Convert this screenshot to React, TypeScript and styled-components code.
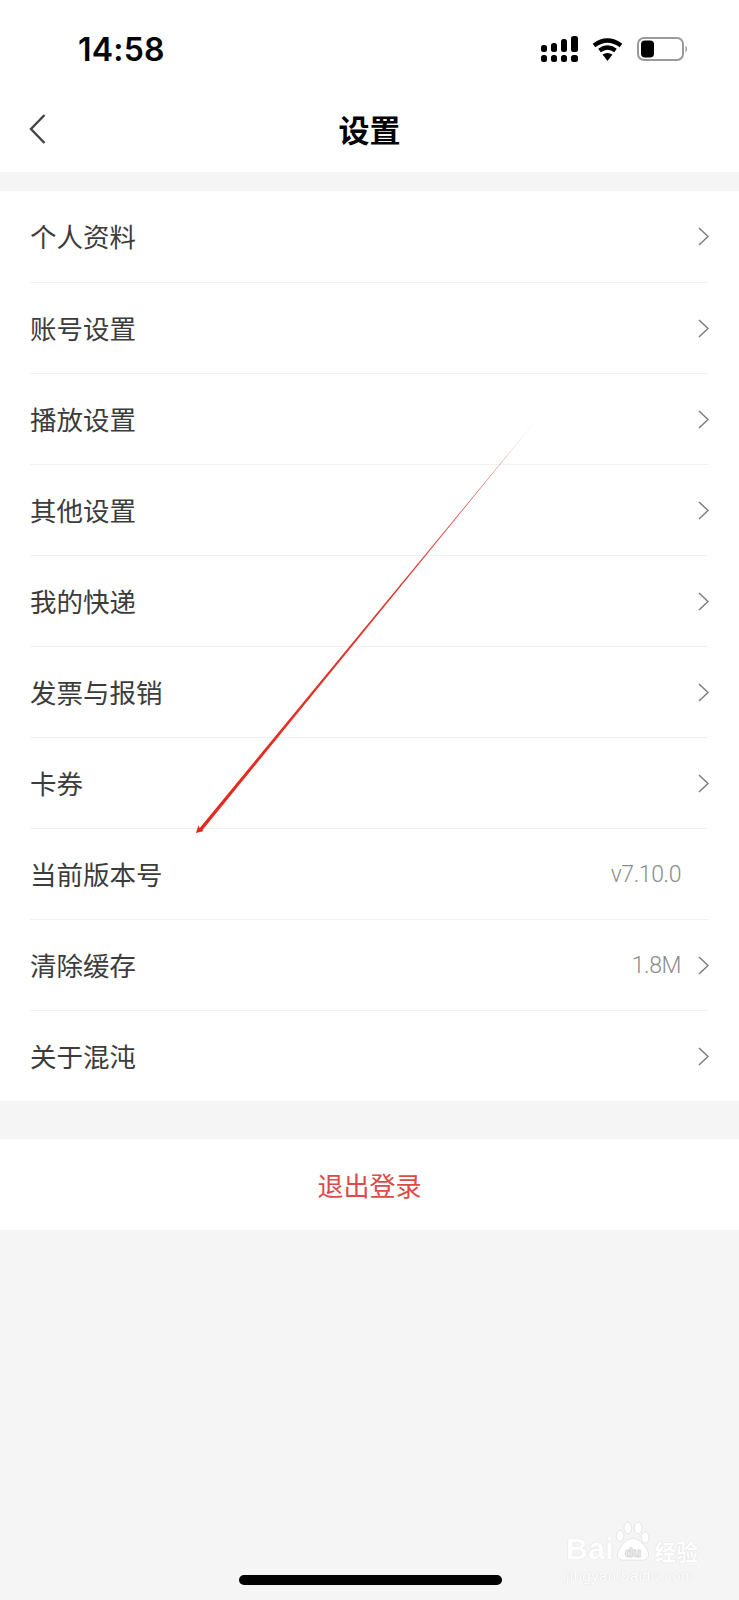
import React from "react";
import styled, { createGlobalStyle } from "styled-components";

const GlobalStyle = createGlobalStyle`
  html, body {
    margin: 0;
    padding: 0;
    background: #f4f4f4;
  }
  * {
    box-sizing: border-box;
  }
`;

const CJK = `"Noto Sans CJK SC", "Noto Sans", sans-serif`;

const Page = styled.div`
  position: relative;
  display: flex;
  flex-direction: column;
  width: 739px;
  height: 1600px;
  overflow: hidden;
  background: #f5f5f5;
  font-family: ${CJK};
`;

/* status bar */
const StatusBar = styled.div`
  display: flex;
  align-items: center;
  justify-content: space-between;
  height: 98px;
  padding: 0 52px 0 78px;
  background: #fff;
`;

const Clock = styled.span`
  font-family: "Inter", "Liberation Sans", sans-serif;
  font-size: 32px;
  font-weight: 600;
  letter-spacing: 0.2px;
  color: #050505;
`;

const StatusIcons = styled.div`
  display: flex;
  align-items: center;
  gap: 14px;
`;

/* nav */
const NavBar = styled.div`
  display: grid;
  grid-template-columns: 1fr auto 1fr;
  align-items: center;
  height: 74px;
  padding: 0 29px;
  background: #fff;
`;

const BackButton = styled.svg`
  display: block;
  margin-top: -13px;
`;

const Title = styled.h1`
  margin: -12px 0 0;
  font-size: 31px;
  font-weight: 700;
  line-height: 1.2;
  color: #000;
`;

/* list */
const List = styled.div<{ $gap: number }>`
  margin-top: ${({ $gap }) => $gap}px;
  background: #fff;
`;

const Row = styled.div`
  display: flex;
  align-items: center;
  height: 91px;
  margin: 0 30px 0 30px;

  & + & {
    border-top: 1px solid #f1f1f1;
  }
`;

const Label = styled.span`
  flex: 1;
  font-size: 26.5px;
  line-height: 1;
  color: #3c3c3c;
`;

const Value = styled.span`
  font-family: "Roboto", "Liberation Sans", sans-serif;
  font-size: 23px;
  font-weight: 300;
  letter-spacing: -0.4px;
  color: #8c8c8c;
`;

const ChevronSlot = styled.span`
  display: flex;
  justify-content: flex-end;
  width: 28px;
`;

const LogoutRow = styled.div`
  display: flex;
  align-items: center;
  justify-content: center;
  height: 91px;
  margin-top: 38px;
  background: #fff;
  font-size: 26px;
  color: #dd4a4a;
`;

const HomeIndicator = styled.div`
  width: 263px;
  height: 10px;
  margin: auto 0 15px 239px;
  border-radius: 5px;
  background: #000;
`;

/* overlays */
const ArrowLayer = styled.svg`
  position: absolute;
  top: 0;
  left: 0;
  pointer-events: none;
`;

const Watermark = styled.div`
  position: absolute;
  top: 1518px;
  left: 566px;
  width: 134px;
  color: #fff;
  text-shadow: 0 0 1px #dcdcdc, 0 0 1px #dcdcdc;
`;

const BrandLine = styled.div`
  display: flex;
  align-items: flex-end;
  height: 46px;
`;

const BrandLatin = styled.span`
  font-family: "Liberation Sans", sans-serif;
  font-size: 30px;
  font-weight: 700;
  line-height: 30px;
  letter-spacing: 0.5px;
`;

const Paw = styled.svg`
  flex: none;
  margin: 0 2px 0 0;
`;

const BrandCn = styled.span`
  font-size: 22px;
  font-weight: 700;
  line-height: 28px;
  white-space: nowrap;
`;

const BrandUrl = styled.div`
  margin-top: 3px;
  font-family: "Liberation Sans", sans-serif;
  font-size: 15px;
  line-height: 17px;
  letter-spacing: 0.4px;
  white-space: nowrap;
`;

const Chevron = () => (
  <svg width="11" height="19" viewBox="0 0 11 19" fill="none">
    <path d="M1 1l9 8.500L1 18" stroke="#7d7d7d" strokeWidth="1.500" />
  </svg>
);

const SignalIcon = () => (
  <svg width="37" height="26" viewBox="0 0 37 26" fill="#000">
    <rect x="0" y="9" width="6" height="7" rx="2.500" />
    <rect x="0" y="19" width="6" height="7" rx="2.500" />
    <rect x="10" y="7" width="6" height="9" rx="2.500" />
    <rect x="10" y="19" width="6" height="7" rx="2.500" />
    <rect x="20" y="3" width="6" height="13" rx="2.500" />
    <rect x="20" y="19" width="6" height="7" rx="2.500" />
    <rect x="30" y="0" width="7" height="16" rx="2.500" />
    <rect x="30" y="19" width="7" height="7" rx="2.500" />
  </svg>
);

const WifiIcon = () => (
  <svg width="31" height="24" viewBox="0 0 31 24" fill="none">
    <path d="M2 8.500Q15.500 -1.500 29 8.500" stroke="#000" strokeWidth="4.400" />
    <path d="M7.500 13.500Q15.500 7.500 23.500 13.500" stroke="#000" strokeWidth="4.200" />
    <path d="M10.500 17.500L15.500 24L20.500 17.500Q15.500 14.500 10.500 17.500Z" fill="#000" />
  </svg>
);

const BatteryIcon = () => (
  <svg width="50" height="24" viewBox="0 0 50 24" fill="none">
    <rect x="1" y="1" width="45" height="22" rx="6" stroke="#9a9a9a" strokeWidth="2" />
    <rect x="4" y="3.500" width="13" height="17" rx="4" fill="#000" />
    <path d="M48.500 8.500c1 .8 1.500 2 1.500 3.500s-.5 2.700-1.500 3.500z" fill="#9a9a9a" />
  </svg>
);

const rows: { label: string; value?: string; arrow: boolean }[] = [
  { label: "个人资料", arrow: true },
  { label: "账号设置", arrow: true },
  { label: "播放设置", arrow: true },
  { label: "其他设置", arrow: true },
  { label: "我的快递", arrow: true },
  { label: "发票与报销", arrow: true },
  { label: "卡券", arrow: true },
  { label: "当前版本号", value: "v7.10.0", arrow: false },
  { label: "清除缓存", value: "1.8M", arrow: true },
  { label: "关于混沌", arrow: true },
];

export default function App() {
  return (
    <Page>
      <GlobalStyle />
      <StatusBar>
        <Clock>14:58</Clock>
        <StatusIcons>
          <SignalIcon />
          <WifiIcon />
          <BatteryIcon />
        </StatusIcons>
      </StatusBar>

      <NavBar>
        <BackButton width="17" height="30" viewBox="0 0 17 30" fill="none">
          <path d="M15.500 1L2 15l13.500 14" stroke="#444" strokeWidth="2.400" />
        </BackButton>
        <Title>设置</Title>
      </NavBar>

      <List $gap={19}>
        {rows.map((row) => (
          <Row key={row.label}>
            <Label>{row.label}</Label>
            {row.value && <Value>{row.value}</Value>}
            <ChevronSlot>{row.arrow && <Chevron />}</ChevronSlot>
          </Row>
        ))}
      </List>

      <LogoutRow>退出登录</LogoutRow>

      <HomeIndicator />

      <ArrowLayer width="739" height="1600" viewBox="0 0 739 1600">
        <defs>
          <linearGradient id="arrowFade" gradientUnits="userSpaceOnUse" x1="196" y1="833" x2="542" y2="413">
            <stop offset="0" stopColor="#e5281d" />
            <stop offset="0.6" stopColor="#df3a30" />
            <stop offset="0.88" stopColor="#e0736c" />
            <stop offset="1" stopColor="#eab5b2" stopOpacity="0.5" />
          </linearGradient>
        </defs>
        <path
          d="M542 413L202.300 830.200L204 831L196 833L198.300 825.500L199.700 827.900Z"
          fill="url(#arrowFade)"
        />
      </ArrowLayer>

      <Watermark>
        <BrandLine>
          <BrandLatin>Bai</BrandLatin>
          <Paw width="38" height="46" viewBox="0 0 44 46" fill="#fff" stroke="#dcdcdc" strokeWidth="0.8">
            <ellipse cx="7" cy="17" rx="4.500" ry="6.500" />
            <ellipse cx="16" cy="8" rx="4.500" ry="6.500" />
            <ellipse cx="28" cy="8" rx="4.500" ry="6.500" />
            <ellipse cx="36" cy="19" rx="4.500" ry="6.500" />
            <path d="M22 20C14 20 4 32 4 39c0 5 5 7 10 6h16c5 1 10-1 10-6 0-7-10-19-18-19z" />
            <text x="22" y="41" fontFamily="Liberation Sans" fontSize="15" fontWeight="700" textAnchor="middle" fill="#fff" stroke="#d4d4d4" strokeWidth="0.6">du</text>
          </Paw>
          <BrandCn>经验</BrandCn>
        </BrandLine>
        <BrandUrl>jingyan.baidu.com</BrandUrl>
      </Watermark>
    </Page>
  );
}
